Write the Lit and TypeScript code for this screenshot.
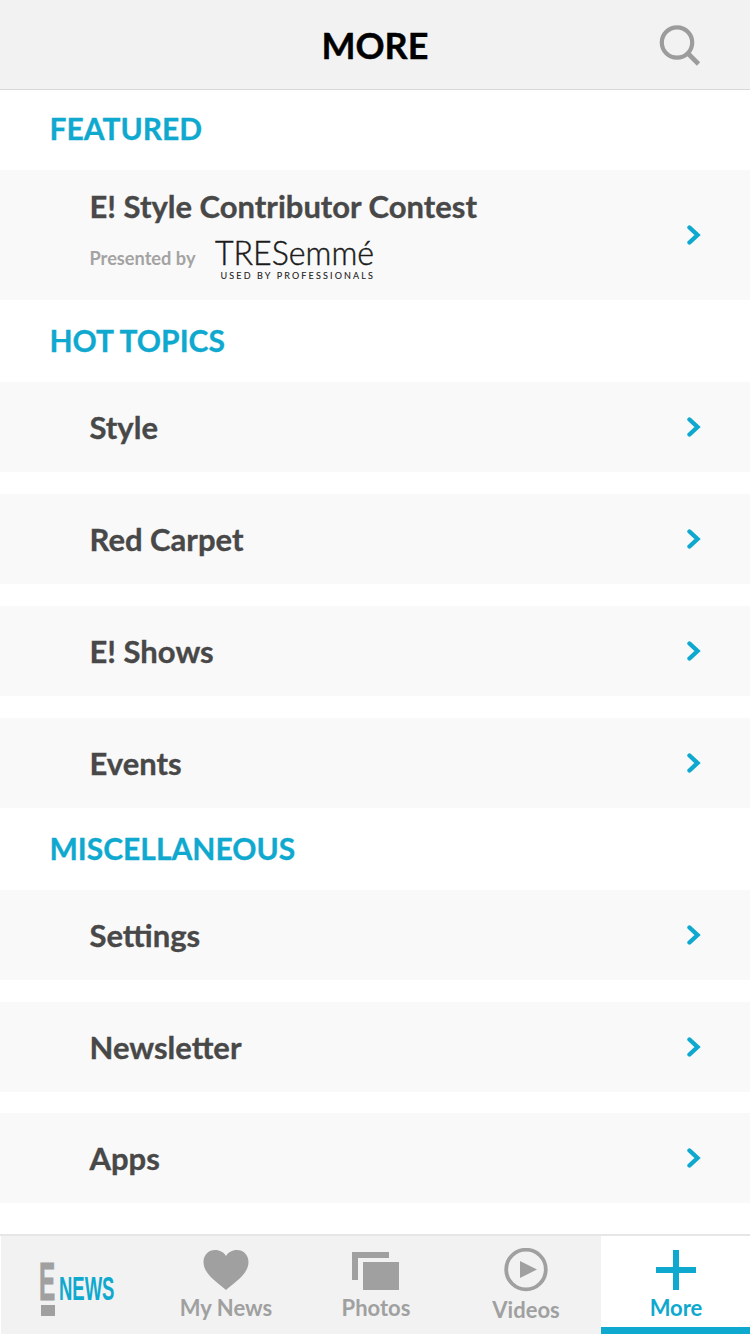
import { LitElement, html, css } from "lit";
import { customElement } from "lit/decorators.js";

const chevron = html`<svg class="chev" width="14" height="20" viewBox="0 0 14 20"><path d="M2.500 2.500 L10.500 10 L2.500 17.500" fill="none" stroke="#0fa9cf" stroke-width="4.400" stroke-linecap="round" stroke-linejoin="miter"/></svg>`;

@customElement("app-root")
export class AppRoot extends LitElement {
  static styles = css`
    :host { display: block; width: 750px; height: 1334px; background: #fff; font-family: Lato, "Open Sans", sans-serif; overflow: hidden; }
    .page { display: flex; flex-direction: column; height: 1334px; }
    header { height: 89px; flex: none; background: #f2f2f2; border-bottom: 1px solid #d9d9d9; display: grid; grid-template-columns: 1fr auto 1fr; align-items: center; }
    h1 { grid-column: 2; margin: 0; font-size: 36px; font-weight: 700; color: #000; line-height: 1; -webkit-text-stroke: 0.4px #000; }
    .search { grid-column: 3; justify-self: end; margin-right: 48px; display: block; }
    main { flex: 1; min-height: 0; }
    h2 { margin: 0; padding: 0 0 2px 49.500px; box-sizing: border-box; height: 82px; display: flex; align-items: center; font-size: 30px; font-weight: 700; color: #0fa9cf; line-height: 1; -webkit-text-stroke: 0.3px #0fa9cf; }
    h2.first { height: 80px; padding-bottom: 4px; }
    .row { height: 90px; box-sizing: border-box; background: #f9f9f9; margin-bottom: 22px; padding: 0 49px 0 89.500px; display: flex; align-items: center; justify-content: space-between; font-size: 31px; font-weight: 700; color: #484848; -webkit-text-stroke: 0.35px #484848; }
    .row.last { margin-bottom: 0; }
    .row.tight { margin-bottom: 21px; }
    .row.feat { height: 130px; margin-bottom: 0; padding-bottom: 3px; }
    .row.feat .chev { margin-top: 3px; }
    .chev { display: block; }
    .feat-text { display: flex; flex-direction: column; gap: 10px; }
    .sponsor { display: flex; align-items: center; gap: 20px; -webkit-text-stroke: 0; }
    .presented { font-size: 18.200px; font-weight: 700; color: #a3a3a3; width: 105px; white-space: nowrap; }
    .brand { display: flex; flex-direction: column; align-items: flex-start; width: 158px; color: #1a1a1a; }
    .brand-name { font-size: 34px; font-weight: 300; line-height: 30px; margin: 2px 0 4px; white-space: nowrap; transform: scaleX(0.945); transform-origin: left center; -webkit-text-stroke: 0.45px #1a1a1a; }
    .brand-sub { font-size: 9px; font-weight: 400; letter-spacing: 2.150px; line-height: 10px; margin-left: 6px; white-space: nowrap; color: #222; -webkit-text-stroke: 0.1px #222; }
    nav { flex: none; height: 98px; border-top: 2px solid #e6e6e6; padding-left: 1px; display: grid; grid-template-columns: repeat(5, 150px); overflow: hidden; }
    .tab { background: #f2f2f2; display: flex; flex-direction: column; align-items: center; font-size: 22px; font-weight: 700; color: #a0a0a0; padding-top: 12px; position: relative; line-height: 26px; }
    .tab svg { display: block; }
    .tab span.label { margin-top: 3px; }
    .tab.videos span.label { margin-top: 5px; }
    .tab.active { background: #fff; color: #0fa9cf; border-bottom: 7px solid #0fa9cf; }
    .logo { flex-direction: row; align-items: flex-start; justify-content: flex-start; padding: 26px 0 0 38px; gap: 3px; }
    .e-mark { display: flex; flex-direction: column; align-items: center; width: 17px; }
    .e-letter { font-family: "Liberation Sans", sans-serif; font-weight: 700; font-size: 54px; line-height: 39px; height: 43px; color: #a0a0a0; transform: scaleX(0.45); transform-origin: center top; -webkit-text-stroke: 1px #a0a0a0; }
    .e-dot { width: 14px; height: 11px; background: #a0a0a0; }
    .news { font-family: "Liberation Sans", sans-serif; font-weight: 700; font-size: 33px; line-height: 33px; color: #0fa9cf; margin-top: 10px; transform: scaleX(0.56); transform-origin: left top; }
  `;

  private row(label: string, cls = "") {
    return html`<div class="row ${cls}">${label}${chevron}</div>`;
  }

  render() {
    return html`<div class="page">
      <header>
        <h1>MORE</h1>
        <svg class="search" width="44" height="44" viewBox="0 0 44 44">
          <circle cx="19" cy="19.500" r="15.200" fill="none" stroke="#9c9c9c" stroke-width="4.200"/>
          <path d="M30 30.500 L40.500 41" stroke="#9c9c9c" stroke-width="4.600" fill="none"/>
        </svg>
      </header>
      <main>
        <h2 class="first">FEATURED</h2>
        <div class="row feat">
          <div class="feat-text">
            <div>E! Style Contributor Contest</div>
            <div class="sponsor">
              <span class="presented">Presented by</span>
              <span class="brand">
                <span class="brand-name">TRESemmé</span>
                <span class="brand-sub">USED BY PROFESSIONALS</span>
              </span>
            </div>
          </div>
          ${chevron}
        </div>
        <h2>HOT TOPICS</h2>
        ${this.row("Style")}${this.row("Red Carpet")}${this.row("E! Shows")}${this.row("Events", "last")}
        <h2>MISCELLANEOUS</h2>
        ${this.row("Settings")}${this.row("Newsletter", "tight")}${this.row("Apps", "last")}
      </main>
      <nav>
        <div class="tab logo">
          <div class="e-mark"><span class="e-letter">E</span><span class="e-dot"></span></div>
          <span class="news">NEWS</span>
        </div>
        <div class="tab">
          <svg width="46" height="44" viewBox="0 0 46 44"><path d="M23 42 C17 36 0.500 27 0.500 14 C0.500 6.500 6 2 12 2 C17 2 21 4.500 23 8 C25 4.500 29 2 34 2 C40 2 45.500 6.500 45.500 14 C45.500 27 29 36 23 42 Z" fill="#a0a0a0"/></svg>
          <span class="label">My News</span>
        </div>
        <div class="tab">
          <svg width="48" height="44" viewBox="0 0 48 44"><path d="M0 4 H37 V10 H6 V32 H0 Z" fill="#a0a0a0"/><rect x="11" y="14" width="36" height="28" fill="#a0a0a0"/></svg>
          <span class="label">Photos</span>
        </div>
        <div class="tab videos">
          <svg width="44" height="44" viewBox="0 0 44 44"><circle cx="22" cy="21.500" r="19.800" fill="none" stroke="#a0a0a0" stroke-width="3.800"/><path d="M16 13 L33 21.500 L16 30 Z" fill="#a0a0a0"/></svg>
          <span class="label">Videos</span>
        </div>
        <div class="tab active">
          <svg width="40" height="44" viewBox="0 0 40 44"><path d="M17 2 H23 V19 H40 V25 H23 V42 H17 V25 H0 V19 H17 Z" fill="#0fa9cf"/></svg>
          <span class="label">More</span>
        </div>
      </nav>
    </div>`;
  }
}
